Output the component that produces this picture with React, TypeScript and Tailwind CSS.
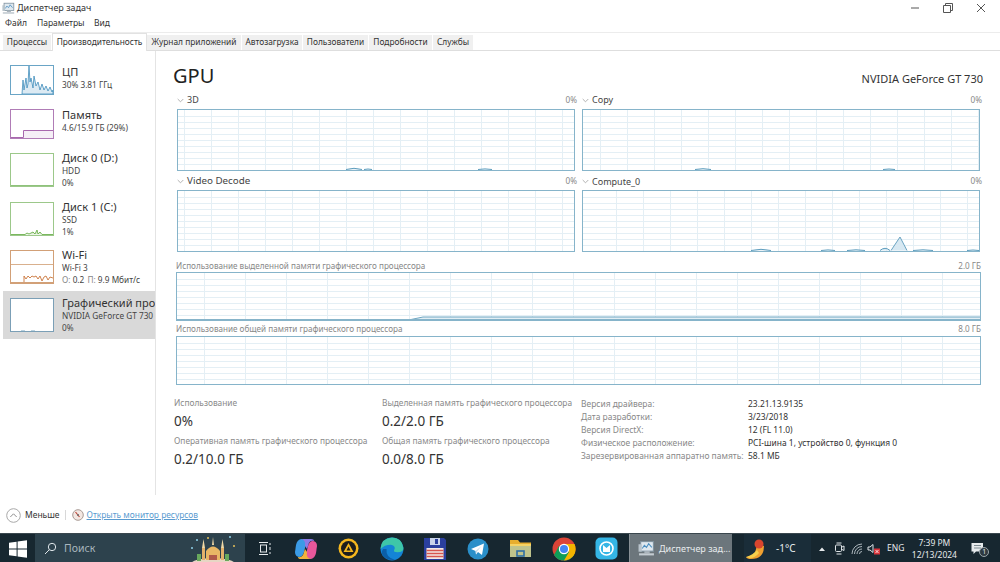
import React from "react";

const font = { fontFamily: '"Noto Sans", "Open Sans", sans-serif' };

function Grid({ w, h, first, step, hStep = 6, color = "#e4eff5" }: { w: number; h: number; first: number; step: number; hStep?: number; color?: string }) {
  const v: number[] = [];
  for (let x = first; x < w; x += step) v.push(x);
  const hz: number[] = [];
  for (let y = hStep; y < h; y += hStep) hz.push(y);
  return (
    <g stroke={color} strokeWidth="1">
      {v.map((x) => <line key={"v" + x} x1={x + 0.5} x2={x + 0.5} y1={0} y2={h} />)}
      {hz.map((y) => <line key={"h" + y} x1={0} x2={w} y1={y + 0.5} y2={y + 0.5} />)}
    </g>
  );
}

function Graph({ w, h, first, step, children }: { w: number; h: number; first: number; step: number; children?: React.ReactNode }) {
  return (
    <div className="relative border border-[#86b4ca] bg-white" style={{ width: w, height: h }}>
      <svg width={w - 2} height={h - 2} className="block">
        <Grid w={w - 2} h={h - 2} first={first} step={step} />
        {children}
      </svg>
    </div>
  );
}

function Bump({ x, w, h, base }: { x: number; w: number; h: number; base: number }) {
  return <path d={`M${x} ${base}Q${x + w / 2} ${base - h * 2} ${x + w} ${base}`} fill="#d7e8f2" stroke="#5d9dbd" strokeWidth="1" />;
}

function Chevron() {
  return (
    <svg width="7" height="5" viewBox="0 0 7 5" className="shrink-0">
      <path d="M0.7 1L3.5 3.8L6.3 1" fill="none" stroke="#a9a9a9" strokeWidth="0.9" />
    </svg>
  );
}

function GraphHead({ label, wide, low }: { label: string; wide?: boolean; low?: boolean }) {
  return (
    <div className={`-mr-[2px] flex h-[18px] items-center justify-between ${low ? "pt-[1px]" : ""}`}>
      <div className={`flex items-center gap-[3px] text-[#444] ${wide ? "text-[9.8px]" : "text-[9px]"}`}>
        <Chevron />
        <span>{label}</span>
      </div>
      <span className="text-[8.2px] text-[#888]">0%</span>
    </div>
  );
}

function Thumb({ color, w = 44, h, children }: { color: string; w?: number; h: number; children?: React.ReactNode }) {
  return (
    <div className="shrink-0 border bg-white" style={{ borderColor: color, width: w, height: h }}>
      <svg width={w - 2} height={h - 2} className="block">{children}</svg>
    </div>
  );
}

function SideItem({ h, active, thumb, name, lines, textClass = "" }: { h: number; active?: boolean; thumb: React.ReactNode; name: string; lines: React.ReactNode[]; textClass?: string }) {
  return (
    <div className={`flex w-[152px] gap-[8px] overflow-hidden pl-[7px] pt-[7px] ${active ? "bg-[#d9d9d9]" : ""}`} style={{ height: h }}>
      {thumb}
      <div className={`min-w-0 whitespace-nowrap ${textClass}`}>
        <div className="-mt-[3px] h-[15px] text-[11px] leading-[15px] text-[#333]">{name}</div>
        {lines.map((l, i) => (
          <div key={i} className="h-[11.5px] text-[8.25px] leading-[11.5px] text-[#444]">{l}</div>
        ))}
      </div>
    </div>
  );
}

function Stat({ label, value, w }: { label: string; value: string; w: number }) {
  return (
    <div style={{ width: w }} className="whitespace-nowrap">
      <div className="h-[12px] text-[8.35px] leading-[12px] text-[#8a8a8a]">{label}</div>
      <div className="mt-[2px] h-[20px] text-[13.5px] leading-[20px] text-[#333]">{value}</div>
    </div>
  );
}

const tabs = ["Процессы", "Производительность", "Журнал приложений", "Автозагрузка", "Пользователи", "Подробности", "Службы"];
const tabW = [48, 95, 94, 60, 65, 63, 40];

const details: [string, string][] = [
  ["Версия драйвера:", "23.21.13.9135"],
  ["Дата разработки:", "3/23/2018"],
  ["Версия DirectX:", "12 (FL 11.0)"],
  ["Физическое расположение:", "PCI-шина 1, устройство 0, функция 0"],
  ["Зарезервированная аппаратно память:", "58.1 МБ"],
];

function TmIcon({ size = 14 }: { size?: number }) {
  return (
    <svg width={size} height={size} viewBox="0 0 16 16">
      <rect x="2.5" y="1.5" width="12" height="9" fill="#dfe8ef" stroke="#7f919e" />
      <path d="M4 8L6 5L8 7L10 3.5L13 7" fill="none" stroke="#4d8fc0" />
      <rect x="6" y="10.5" width="5" height="2" fill="#aab4bc" />
      <rect x="1" y="12.5" width="14" height="2" fill="#c4ccd2" />
      <rect x="0.5" y="4" width="3" height="7" fill="#b9c4cc" />
    </svg>
  );
}

function TaskSlot({ children, w = 43 }: { children: React.ReactNode; w?: number }) {
  return <div className="flex h-full shrink-0 items-center justify-center" style={{ width: w }}>{children}</div>;
}

export default function App() {
  return (
    <div className="flex h-[562px] w-[1000px] flex-col overflow-hidden bg-white" style={font}>
      {/* title */}
      <div className="flex h-[16px] shrink-0 items-center justify-between pl-[2px]">
        <div className="flex items-center gap-[2px] text-[9px] text-[#333]">
          <TmIcon size={13} />
          <span>Диспетчер задач</span>
        </div>
        <div className="flex items-center">
          <div className="flex w-[33px] justify-center">
            <svg width="10" height="10" viewBox="0 0 10 10"><path d="M1 5H9" stroke="#555" strokeWidth="1" /></svg>
          </div>
          <div className="flex w-[33px] justify-center">
            <svg width="10" height="10" viewBox="0 0 10 10"><path d="M0.5 2.5H7.5V9.5H0.5ZM2.5 2.5V0.5H9.5V7.5H7.5" fill="none" stroke="#555" strokeWidth="1" /></svg>
          </div>
          <div className="flex w-[36px] justify-center pr-[3px]">
            <svg width="10" height="10" viewBox="0 0 10 10"><path d="M1 1L9 9M9 1L1 9" stroke="#555" strokeWidth="1" /></svg>
          </div>
        </div>
      </div>
      {/* menu */}
      <div className="flex h-[17px] shrink-0 items-center border-b border-[#ececec] pb-[2px] pl-[5px] text-[8.5px] text-[#333]">
        <span className="w-[32px]">Файл</span>
        <span className="w-[57px]">Параметры</span>
        <span>Вид</span>
      </div>
      {/* tabs */}
      <div className="flex h-[18px] shrink-0 items-end border-b border-[#dedede] pl-[3px]">
        {tabs.map((t, i) => (
          <div
            key={t}
            style={{ width: tabW[i] }}
            className={`flex items-center justify-center whitespace-nowrap text-[8.35px] text-[#333] ${
              i === 1 ? "relative z-10 -mb-px h-[18px] border border-b-0 border-[#e2e2e2] bg-white" : "mr-px h-[15px] bg-[#f0f0f0] last:mr-0"
            }`}
          >
            {t}
          </div>
        ))}
      </div>
      {/* body */}
      <div className="flex h-[446px] shrink-0">
        <div className="h-[444px] w-[156px] shrink-0 border-r border-[#e4e4e4] pl-[3px] pt-[7px]">
          <SideItem
            h={44}
            name="ЦП"
            textClass="pt-[2px]"
            lines={["30%  3.81 ГГц"]}
            thumb={
              <Thumb color="#6aa5c6" h={30}>
                <path d="M11 28L12 14L13 24L15 12L16 22L17 18L18 0L19 16L20 12L22 22L23 10L25 20L27 16L29 24L31 18L33 24L35 20L37 25L39 21L41 26L42 24V28Z" fill="#dceaf3" stroke="#3f8dbb" strokeWidth="0.8" />
              </Thumb>
            }
          />
          <SideItem
            h={44}
            name="Память"
            textClass="pt-[1px]"
            lines={["4.6/15.9 ГБ (29%)"]}
            thumb={
              <Thumb color="#b07cb6" h={30}>
                <path d="M0 27.5H12.5V20.5H42" fill="none" stroke="#a868ae" strokeWidth="1" />
                <path d="M13 21H42V28H13Z" fill="#f5eff6" />
              </Thumb>
            }
          />
          <SideItem h={49} name="Диск 0 (D:)" lines={["HDD", "0%"]} thumb={<Thumb color="#9cc88a" h={34}><path d="M0 31.5H42" stroke="#8fc27b" /></Thumb>} />
          <SideItem
            h={48}
            name="Диск 1 (C:)"
            lines={["SSD", "1%"]}
            thumb={
              <Thumb color="#9cc88a" h={34}>
                <path d="M0 31.5H14L16 30L18 31L22 29L24 31L26 27L27 31L29 29L31 31.5H42" fill="#dcecd3" stroke="#6cb04d" strokeWidth="0.9" />
              </Thumb>
            }
          />
          <SideItem
            h={48}
            name="Wi-Fi"
            lines={["Wi-Fi 3", <span key="o"><span className="text-[#888]">О: </span>0.2 <span className="ml-[1px] text-[#888]">П: </span>9.9 Мбит/с</span>]}
            thumb={
              <Thumb color="#d2a077" h={34}>
                <path d="M0 13.5H42" stroke="#d9b08d" strokeWidth="1" />
                <path d="M13 31V25L15 28L17 25L19 27L21 25L23 26L25 25L27 28L29 25L31 30L33 26L35 25L37 29L39 26L42 27" fill="none" stroke="#c9753a" strokeWidth="0.9" />
                <path d="M0 31.5H42" stroke="#d2a077" />
              </Thumb>
            }
          />
          <SideItem
            h={48}
            active
            name="Графический процессор"
            lines={["NVIDIA GeForce GT 730", "0%"]}
            thumb={<Thumb color="#7b9fb6" h={34}><path d="M10 31.5H14M20 31.5H24" stroke="#bcd3e0" /></Thumb>}
          />
        </div>
        <div className="min-w-0 flex-1">
          {/* heading */}
          <div className="flex h-[40px] items-start justify-between pl-[17px] pr-[17px]">
            <span className="mt-[11px] h-[28px] text-[20px] leading-[28px] text-[#222]">GPU</span>
            <span className="mt-[20px] text-[11px] leading-[15px] text-[#333]">NVIDIA GeForce GT 730</span>
          </div>
          <div className="ml-[21px] grid w-[803px] grid-cols-[398px_398px] gap-x-[7px] gap-y-[1px]">
            <div>
              <GraphHead label="3D" />
              <Graph w={398} h={62} first={6} step={27}>
                <Bump x={168} w={16} h={1.2} base={59.5} />
                <Bump x={186} w={8} h={0.5} base={59.5} />
                <Bump x={300} w={14} h={0.6} base={59.5} />
              </Graph>
            </div>
            <div>
              <GraphHead label="Copy" />
              <Graph w={398} h={62} first={17} step={27}>
                <Bump x={112} w={16} h={0.8} base={59.5} />
                <Bump x={300} w={12} h={0.5} base={59.5} />
              </Graph>
            </div>
            <div>
              <GraphHead label="Video Decode" wide low />
              <Graph w={398} h={62} first={6} step={27} />
            </div>
            <div>
              <GraphHead label="Compute_0" low />
              <Graph w={398} h={62} first={33} step={27}>
                <Bump x={168} w={20} h={1.2} base={59.5} />
                <Bump x={238} w={14} h={0.6} base={59.5} />
                <Bump x={264} w={18} h={0.7} base={59.5} />
                <Bump x={297} w={10} h={2.2} base={59.5} />
                <path d="M308 59.5L317 46L324 59.5" fill="#d7e8f2" stroke="#6aa3c1" strokeWidth="1" />
                <Bump x={330} w={20} h={0.7} base={59.5} />
                <Bump x={384} w={12} h={0.5} base={59.5} />
              </Graph>
            </div>
          </div>
          <div className="ml-[20px] mt-[7px] w-[805px]">
            <div className="flex h-[13px] items-center justify-between pt-[1px] text-[8.15px] text-[#888]">
              <span>Использование выделенной памяти графического процессора</span>
              <span>2.0 ГБ</span>
            </div>
            <Graph w={805} h={49} first={27} step={41}>
              <path d="M234 46.5L246 44H803V47H234Z" fill="#e2eef4" />
              <path d="M234 46.5L246 44H803" fill="none" stroke="#6ea6c2" strokeWidth="1" />
              <path d="M0 46.5H803" stroke="#86b4ca" strokeWidth="1" />
            </Graph>
            <div className="flex h-[15px] items-center justify-between pt-[1px] text-[8.15px] text-[#888]">
              <span>Использование общей памяти графического процессора</span>
              <span>8.0 ГБ</span>
            </div>
            <Graph w={805} h={49} first={27} step={41} />
          </div>
          {/* stats */}
          <div className="ml-[18px] mt-[12px] flex">
            <div className="flex w-[208px] flex-col gap-[4px]">
              <Stat w={208} label="Использование" value="0%" />
              <Stat w={208} label="Оперативная память графического процессора" value="0.2/10.0 ГБ" />
            </div>
            <div className="flex w-[199px] flex-col gap-[4px]">
              <Stat w={199} label="Выделенная память графического процессора" value="0.2/2.0 ГБ" />
              <Stat w={199} label="Общая память графического процессора" value="0.0/8.0 ГБ" />
            </div>
            <div className="flex flex-col pt-[1px]">
              {details.map(([k, v]) => (
                <div key={k} className="flex h-[13px] items-center whitespace-nowrap">
                  <span className="w-[167px] text-[8.45px] text-[#888]">{k}</span>
                  <span className="text-[8.45px] text-[#333]">{v}</span>
                </div>
              ))}
            </div>
          </div>
        </div>
      </div>
      {/* footer */}
      <div className="flex h-[36px] shrink-0 items-center pl-[6px]">
        <svg width="15" height="15" viewBox="0 0 15 15">
          <circle cx="7.5" cy="7.5" r="6.8" fill="none" stroke="#a8a8a8" />
          <path d="M4.3 9L7.5 5.8L10.7 9" fill="none" stroke="#8f8f8f" />
        </svg>
        <span className="ml-[4px] text-[8.5px] text-[#333]">Меньше</span>
        <span className="ml-[5px] h-[10px] w-px bg-[#d8d8d8]" />
        <svg width="12" height="12" viewBox="0 0 12 12" className="ml-[6px]">
          <circle cx="6" cy="6" r="5.3" fill="#f3e7e2" stroke="#a89a94" />
          <path d="M3.5 3L7.5 8" stroke="#c0483a" strokeWidth="1.2" />
          <circle cx="6" cy="6" r="1" fill="#6b6b6b" />
        </svg>
        <span className="ml-[3px] text-[8.4px] text-[#5a9bd0] underline">Открыть монитор ресурсов</span>
      </div>
      {/* taskbar */}
      <div className="flex h-[30px] shrink-0 items-center border-t border-[#3a474e] bg-[#172730] text-white">
        <TaskSlot w={35}>
          <svg width="18" height="18" viewBox="0 0 18 18" fill="#fff">
            <path d="M0 2.8L7.6 1.7V8.5H0ZM8.6 1.5L18 0.2V8.5H8.6ZM0 9.5H7.6V16.3L0 15.2ZM8.6 9.5H18V17.8L8.6 16.5Z" />
          </svg>
        </TaskSlot>
        <div className="flex h-full w-[210px] shrink-0 items-center overflow-hidden bg-[#2d424d] pl-[9px]">
          <svg width="13" height="13" viewBox="0 0 13 13" fill="none" stroke="#dfe6ea" strokeWidth="1">
            <circle cx="8" cy="5" r="3.7" />
            <path d="M5.3 7.7L1 12" />
          </svg>
          <span className="ml-[7px] text-[10.5px] text-[#a9b6bd]">Поиск</span>
          <svg width="50" height="29" viewBox="0 0 50 29" className="ml-[93px] shrink-0">
            <ellipse cx="25" cy="30" rx="22" ry="6" fill="#e7d6c4" />
            <path d="M14 26V14H17V26ZM33 26V14H36V26Z" fill="#e3b16b" />
            <path d="M18 26V17Q25 8 32 17V26Z" fill="#e9b765" />
            <path d="M15.5 5L17 14H14ZM34.5 5L36 14H33ZM25 3L26 11H24Z" fill="#f1d9a6" />
            <path d="M9 27V20H13V27ZM37 27V20H41V27Z" fill="#68a85c" />
            <path d="M21 26V21H29V26Z" fill="#b05a4a" />
            <circle cx="4" cy="14" r="1" fill="#8fd0e8" /><circle cx="9" cy="6" r="1" fill="#8fd0e8" /><circle cx="42" cy="3" r="1" fill="#8fd0e8" /><circle cx="46" cy="12" r="1" fill="#e6c15a" /><circle cx="20" cy="4" r="1" fill="#e6c15a" />
          </svg>
        </div>
        <TaskSlot w={39}>
          <svg width="13" height="13" viewBox="0 0 13 13" fill="none" stroke="#e6eaec" strokeWidth="1">
            <rect x="2.5" y="3" width="6" height="7" />
            <path d="M1 0.5H10M1 12.5H10M12 1V3M12 5V8M12 10V12" />
          </svg>
        </TaskSlot>
        <TaskSlot>
          <svg width="24" height="24" viewBox="0 0 24 24">
            <path d="M7 2Q3 3 2 8L1 15Q1 20 6 20Q9 19 10 15L12 7Q12 2 7 2Z" fill="#3b9be6" />
            <path d="M17 22Q21 21 22 16L23 9Q23 4 18 4Q15 5 14 9L12 17Q12 22 17 22Z" fill="#e8579b" />
            <path d="M7 2H17Q20 2 20 4Q15 3 14 9L13 12L11 9Q12 3 7 2Z" fill="#8c7ae6" />
            <path d="M17 22H7Q4 22 4 20Q9 21 10 15L11 12L13 15Q12 21 17 22Z" fill="#f2b33d" />
          </svg>
        </TaskSlot>
        <TaskSlot>
          <svg width="21" height="21" viewBox="0 0 21 21">
            <circle cx="10.5" cy="10.5" r="10" fill="#f5b71e" />
            <circle cx="10.5" cy="10.5" r="7.5" fill="#1d1d1d" />
            <path d="M10.5 5L15.5 14H5.5ZM10.5 8.5L8.5 12.5H12.5Z" fill="#f5b71e" fillRule="evenodd" />
          </svg>
        </TaskSlot>
        <TaskSlot>
          <svg width="24" height="24" viewBox="0 0 22 22">
            <circle cx="11" cy="11" r="10.5" fill="#1484d6" />
            <path d="M0.5 11Q1 1 11 0.5Q20 0.5 21.5 10Q21.5 14 16 14Q12 14 13 12Q15 8 10 7Q4 7 0.5 11Z" fill="#3ec6a8" />
            <path d="M6 11Q5 19 14 21Q6 22 2 16Q1 13 3 11Z" fill="#0b5fa8" />
          </svg>
        </TaskSlot>
        <TaskSlot>
          <svg width="24" height="24" viewBox="0 0 24 24">
            <path d="M1 1H21L23 3V23H1Z" fill="#2b3f9e" />
            <rect x="7" y="1" width="10" height="7" fill="#c9d3ea" />
            <rect x="12" y="2" width="3" height="5" fill="#2b3f9e" />
            <rect x="3.5" y="11" width="17" height="11" fill="#f3e9e4" />
            <path d="M3.5 13.5H20.5M3.5 16.5H20.5M3.5 19.5H20.5" stroke="#d7564f" strokeWidth="1.4" />
          </svg>
        </TaskSlot>
        <TaskSlot>
          <svg width="22" height="22" viewBox="0 0 22 22">
            <circle cx="11" cy="11" r="10.5" fill="#2a8fc9" />
            <path d="M4 11L17 5.5L15 17L11 14L9 16.5L8.6 13Z" fill="#fff" />
            <path d="M8.6 13L14.5 8L10 13.5L9 16.5Z" fill="#c8dbea" />
          </svg>
        </TaskSlot>
        <TaskSlot>
          <svg width="21" height="19" viewBox="0 0 21 19">
            <path d="M0 1H8L10 3.5H21V18H0Z" fill="#e7ae2f" />
            <rect x="0" y="5" width="21" height="13" fill="#f6d365" />
            <rect x="0" y="7" width="21" height="11" fill="#5aa6d8" opacity="0.35" />
            <rect x="7" y="12" width="7" height="5" fill="none" stroke="#2e6ea6" strokeWidth="1.6" />
          </svg>
        </TaskSlot>
        <TaskSlot>
          <svg width="24" height="24" viewBox="0 0 24 24">
            <circle cx="12" cy="12" r="11.5" fill="#db4437" />
            <path d="M12 12L22 18A11.5 11.5 0 0 1 12 23.5A11.5 11.5 0 0 1 2 18L7 9Z" fill="#0f9d58" />
            <path d="M12 7H22.5A11.5 11.5 0 0 1 12 23.5L17 15Z" fill="#f4b400" />
            <circle cx="12" cy="12" r="5.2" fill="#fff" />
            <circle cx="12" cy="12" r="4" fill="#4285f4" />
          </svg>
        </TaskSlot>
        <TaskSlot>
          <svg width="23" height="23" viewBox="0 0 23 23">
            <rect x="0.5" y="0.5" width="22" height="22" rx="5" fill="#35b6e6" />
            <circle cx="11.5" cy="11.5" r="6.5" fill="none" stroke="#fff" strokeWidth="1.6" />
            <path d="M8 8L11.5 11L15 8V15H8Z" fill="#fff" />
          </svg>
        </TaskSlot>
        <div className="ml-[1px] flex h-full w-[103px] shrink-0 items-center border-l border-[#8a9297] bg-[#6c767c] pl-[8px] text-[9px] text-[#e8ecee]">
          <TmIcon size={17} />
          <span className="ml-[4px] whitespace-nowrap">Диспетчер зад...</span>
        </div>
        <div className="ml-[12px] flex h-full w-[67px] shrink-0 items-center bg-[#1a2d39]">
          <svg width="20" height="22" viewBox="0 0 20 22" className="ml-[1px]">
            <path d="M1 19Q11 20 12 5L19 8Q19 21 6 21Q2 21 1 19Z" fill="#f0a030" />
            <circle cx="14" cy="6" r="4.5" fill="#d9452e" />
            <path d="M1 19Q8 17 12 12L14 15Q10 20 5 20Z" fill="#f6d04d" />
          </svg>
          <span className="ml-[11px] text-[10px] text-[#e8ecee]">-1°C</span>
        </div>
        <div className="flex h-full flex-1 items-center text-[#e6eaec]">
          <svg width="8" height="6" viewBox="0 0 8 6" className="ml-[7px]"><path d="M1 5L4 1.5L7 5Z" fill="#e6eaec" /></svg>
          <svg width="11" height="13" viewBox="0 0 11 13" fill="none" stroke="#dfe4e7" strokeWidth="1" className="ml-[8px]">
            <rect x="1.5" y="3" width="6" height="6.5" rx="1" />
            <path d="M8 5L10 4V8.5L8 7.5M2.5 1H7.5M2.5 12H7.5" />
          </svg>
          <svg width="12" height="12" viewBox="0 0 12 12" fill="none" stroke="#aab4ba" strokeWidth="1" className="ml-[6px]">
            <path d="M1 11A10 10 0 0 1 11 1M3.5 11A7.5 7.5 0 0 1 11 3.5M6 11A5 5 0 0 1 11 6M8.5 11A2.5 2.5 0 0 1 11 8.5" />
          </svg>
          <svg width="13" height="13" viewBox="0 0 13 13" className="ml-[4px]">
            <path d="M1 5H3L6 2.5V10.5L3 8H1Z" fill="none" stroke="#dfe4e7" />
            <rect x="7" y="6.5" width="6" height="6" fill="#d8343a" />
            <path d="M8.5 8L11.5 11M11.5 8L8.5 11" stroke="#fff" strokeWidth="0.8" />
          </svg>
          <span className="ml-[7px] text-[8.5px]">ENG</span>
          <div className="ml-[8px] flex w-[44px] flex-col items-center whitespace-nowrap text-[8.5px] leading-[12px]">
            <span>7:39 PM</span>
            <span>12/13/2024</span>
          </div>
          <div className="relative ml-[15px] shrink-0">
            <svg width="14" height="14" viewBox="0 0 14 14" className="block"><path d="M0.5 1H12V9.5H5L2.5 12V9.5H0.5Z" fill="#e6eaec" /><path d="M3 3.5H10M3 6H10" stroke="#7d8a91" /></svg>
            <span className="absolute left-[8px] top-[5px] flex h-[10px] w-[10px] items-center justify-center rounded-full border border-[#9aa5ab] bg-[#2f3a40] text-[7px] leading-none">1</span>
          </div>
        </div>
      </div>
    </div>
  );
}
